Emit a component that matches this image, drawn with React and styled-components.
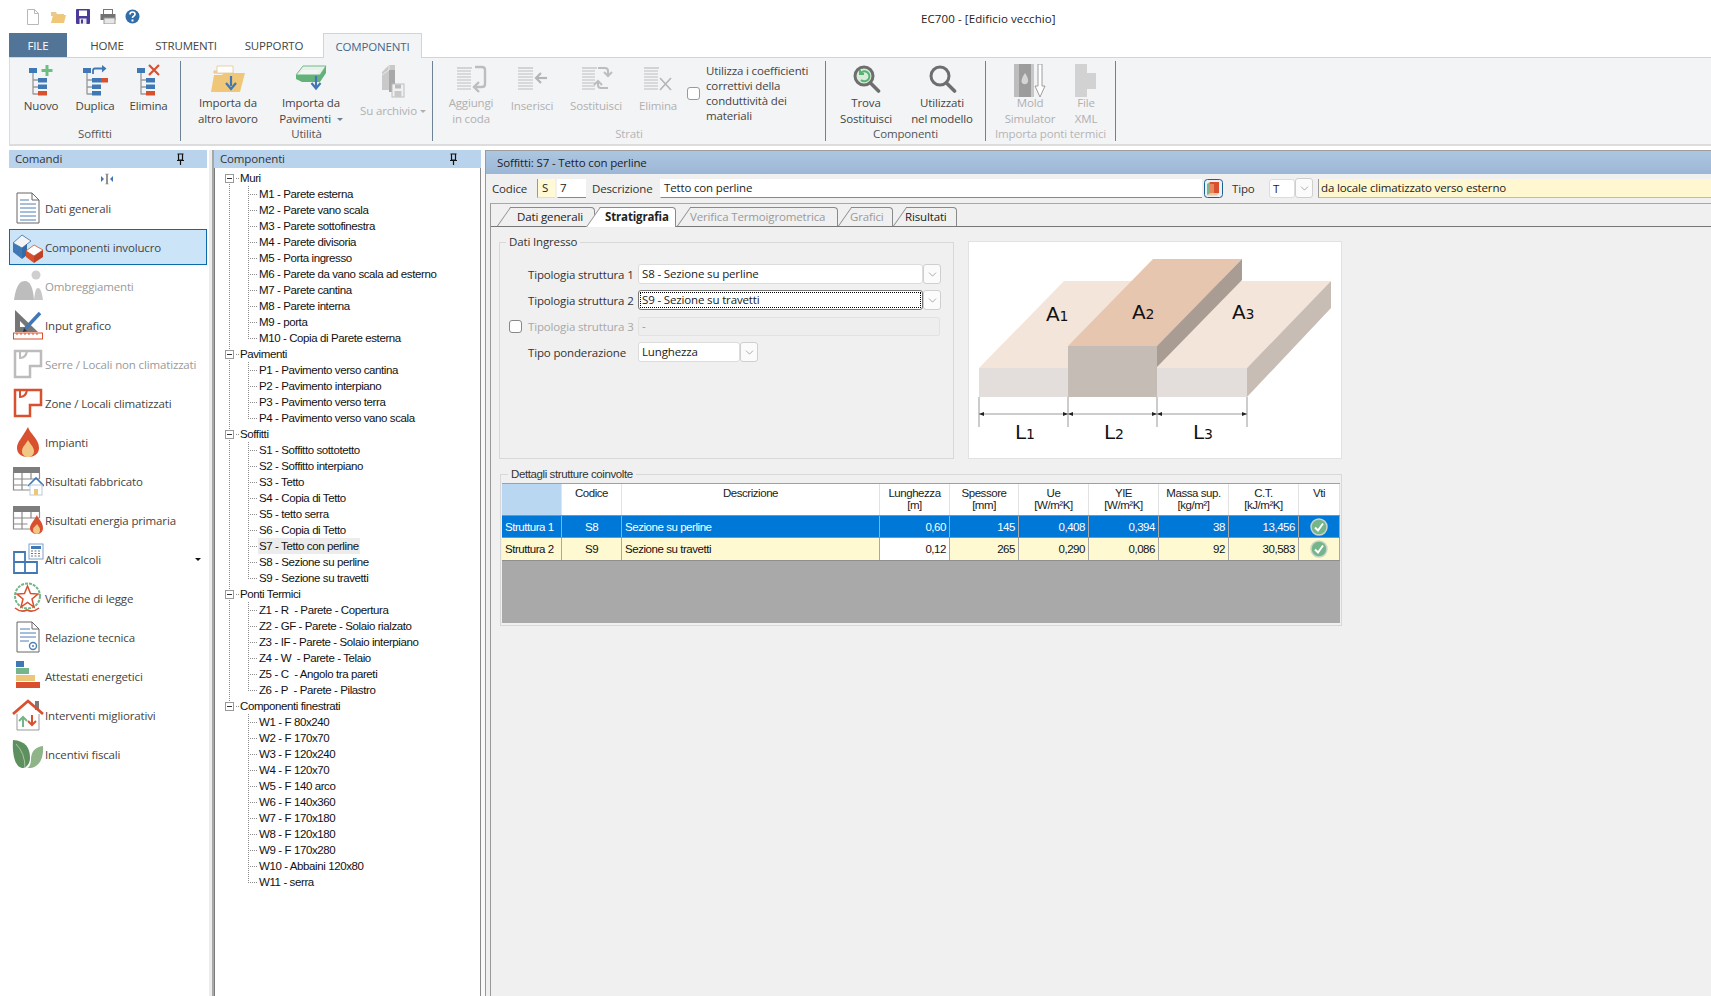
import React from 'react';
import styled, { createGlobalStyle } from 'styled-components';
import { ChevronDown } from 'lucide-react';

const GlobalStyle = createGlobalStyle`
  html, body { margin: 0; padding: 0; background: #fff; }
  body { font-family: "Open Sans", "Liberation Sans", sans-serif; font-size: 11.5px; letter-spacing: -0.15px; color: #333; }
  #root { height: 996px; overflow: hidden; }
  * { box-sizing: border-box; }
`;

const Page = styled.div`
  width: 1711px;
  height: 996px;
  display: flex;
  flex-direction: column;
  overflow: hidden;
`;

/* ---------- title + ribbon ---------- */

const TitleBar = styled.div`
  height: 33px;
  display: flex;
  align-items: center;
  padding-left: 20px;
`;
const QuickIcon = styled.div`
  width: 25px;
  display: flex;
  justify-content: center;
`;
const Title = styled.div`
  margin-left: 776px;
  padding-top: 4px;
  color: #222;
  letter-spacing: 0.1px;
`;
const TabRow = styled.div`
  height: 24px;
  display: flex;
  margin-left: 9px;
  position: relative;
  z-index: 1;
`;
const FileTab = styled.div`
  width: 58px;
  background: #527597;
  color: #fff;
  display: flex;
  align-items: center;
  justify-content: center;
`;
const MenuTab = styled.div`
  width: ${p => p.$w}px;
  display: flex;
  align-items: center;
  justify-content: center;
  color: ${p => (p.$active ? '#45688a' : '#444')};
  background: ${p => (p.$active ? '#f3f4f6' : 'transparent')};
  border: 1px solid ${p => (p.$active ? '#d4d4d4' : 'transparent')};
  border-bottom: none;
  height: ${p => (p.$active ? '25px' : '24px')};
`;
const Ribbon = styled.div`
  height: 89px;
  margin-left: 9px;
  background: #f3f4f6;
  border-top: 1px solid #d4d4d4;
  border-bottom: 2px solid #dcdcdc;
  border-left: 1px solid #dcdcdc;
  display: flex;
`;
const Group = styled.div`
  width: ${p => p.$w}px;
  margin: 3px 0 3px;
  border-right: 1px solid #6d8297;
  display: flex;
  flex-direction: column;
`;
const GroupItems = styled.div`
  height: 70px;
  display: flex;
  padding-left: ${p => p.$pl || 0}px;
`;
const GroupLabel = styled.div`
  text-align: center;
  line-height: 14px;
  color: ${p => (p.$off ? '#b5b5b5' : '#555')};
`;
const RibbonBtn = styled.div`
  width: ${p => p.$w}px;
  display: flex;
  flex-direction: column;
  align-items: center;
  color: ${p => (p.$off ? '#b0b0b0' : '#444')};
  text-align: center;
  line-height: 16px;
`;
const RibbonIcon = styled.div`
  height: 34px;
  padding-top: 3px;
  display: flex;
  align-items: flex-start;
  justify-content: center;
`;
const BtnText = styled.div`
  margin-top: ${p => p.$mt || 0}px;
  white-space: nowrap;
  position: relative;
`;
const Caret = styled.span`
  display: inline-block;
  width: 0;
  height: 0;
  margin-left: ${p => p.$ml ?? 3}px;
  vertical-align: middle;
  border-left: 3px solid transparent;
  border-right: 3px solid transparent;
  border-top: 3px solid ${p => p.$color || '#6b7f96'};
`;
const RibbonCheck = styled.div`
  display: flex;
  align-items: center;
  margin-left: 1px;
  height: 64px;
  gap: 6px;
  line-height: 15px;
  color: #444;
  white-space: nowrap;
`;
const Box = styled.span`
  display: inline-block;
  flex: none;
  width: 13px;
  height: 13px;
  background: #fff;
  border: 1px solid ${p => p.$c || '#999'};
  border-radius: 3px;
`;

/* ---------- body ---------- */

const Body = styled.div`
  flex: 1;
  display: flex;
  padding: 4px 0 0 9px;
  min-height: 0;
`;
const Sidebar = styled.div`
  width: 200px;
  flex: none;
`;
const Splitter = styled.div`
  width: ${p => p.$w}px;
  background: ${p => p.$bg || '#ececec'};
  border-right: 2px solid ${p => p.$c || 'transparent'};
  flex: none;
`;
const PanelHeader = styled.div`
  height: 18px;
  width: ${p => (p.$w ? `${p.$w}px` : 'auto')};
  background: #b9d3ec;
  display: flex;
  align-items: center;
  justify-content: space-between;
  padding: 0 ${p => p.$pr}px 1px 6px;
  color: #333;
`;
const CollapseRow = styled.div`
  height: 22px;
  width: 196px;
  display: flex;
  align-items: center;
  justify-content: center;
`;
const NavItem = styled.div`
  height: 36px;
  margin-bottom: 3px;
  width: 198px;
  display: flex;
  align-items: center;
  padding-left: 1px;
  white-space: nowrap;
  background: ${p => (p.$active ? '#cce4f7' : 'transparent')};
  border: 1px solid ${p => (p.$active ? '#0b6bab' : 'transparent')};
  color: ${p => (p.$off ? '#9a9a9a' : '#444')};
`;
const NavIcon = styled.div`
  width: 34px;
  height: 32px;
  display: flex;
  align-items: center;
  justify-content: center;
  flex: none;
`;
const NavCaret = styled.div`
  margin-left: auto;
  padding-right: 5px;
  display: flex;
`;

const TreePanel = styled.div`
  width: 267px;
  flex: none;
  display: flex;
  flex-direction: column;
`;
const TreeBox = styled.div`
  flex: 1;
  border-left: 1px solid #7a7a7a;
  border-right: 1px solid #8a8a8a;
  padding-top: 2px;
  font-family: "Liberation Sans", sans-serif;
  font-size: 11.5px;
  color: #111;
  letter-spacing: -0.4px;
`;
const TreeRow = styled.div`
  height: 16px;
  line-height: 16px;
  display: flex;
  white-space: nowrap;
`;
const dots = 'repeating-linear-gradient(to bottom, #8a8a8a 0 1px, transparent 1px 2px)';
const hdots = 'repeating-linear-gradient(to right, #8a8a8a 0 1px, transparent 1px 2px)';
const RootGuide = styled.div`
  width: ${p => p.$w}px;
  flex: none;
  display: flex;
  align-items: center;
  margin-left: 1px;
  background-image: ${p => (p.$line ? dots : 'none')};
  background-repeat: no-repeat;
  background-size: 1px ${p => (p.$half ? '8px' : '100%')};
  background-position: 13px ${p => (p.$halfBottom ? 'bottom' : 'top')};
`;
const ToggleBox = styled.div`
  width: 9px;
  height: 9px;
  background: #fff;
  border: 1px solid #9a9a9a;
  margin-left: 9px;
  display: flex;
  align-items: center;
  justify-content: center;
  &::after { content: ""; width: 5px; height: 1px; background: #333; }
`;
const Stub = styled.div`
  width: 19px;
  flex: none;
  background-image: ${hdots}, ${dots};
  background-repeat: no-repeat;
  background-size: 10px 1px, 1px ${p => (p.$last ? '8px' : '100%')};
  background-position: 6px 8px, 6px top;
`;
const RootStub = styled.div`
  width: 4px;
  flex: none;
  background-image: ${hdots};
  background-repeat: no-repeat;
  background-size: 4px 1px;
  background-position: 0 8px;
`;
const TreeLabel = styled.div`
  padding: 0 1px;
  margin-left: ${p => p.$ml || 0}px;
  background: ${p => (p.$sel ? '#ececec' : 'transparent')};
`;

const Main = styled.div`
  flex: 1;
  background: #f0f0f0;
  border-left: 1px solid #999;
  display: flex;
  flex-direction: column;
  min-width: 0;
`;
const MainHeader = styled.div`
  height: 24px;
  background: linear-gradient(#adc6e0, #9cb7d6);
  border-top: 1px solid #9c9c9c;
  padding-left: 11px;
  display: flex;
  align-items: center;
  color: #222;
`;
const CodeRow = styled.div`
  height: 29px;
  display: flex;
  align-items: center;
  padding: 0 0 1px 6px;
`;
const RowLabel = styled.div`
  color: #333;
  width: ${p => p.$w}px;
  margin-left: ${p => p.$ml || 0}px;
  flex: none;
`;
const CodeField = styled.div`
  width: ${p => p.$w}px;
  height: 19px;
  margin-left: ${p => p.$ml || 0}px;
  background: ${p => p.$bg || '#fff'};
  border-bottom: 1px solid ${p => p.$line || '#ddd'};
  border-left: 1px solid ${p => p.$left || 'transparent'};
  padding-left: ${p => p.$pad ?? 3}px;
  line-height: 18px;
  flex: none;
  color: #222;
  white-space: nowrap;
`;
const BookWrap = styled.div`
  margin-left: 2px;
  display: flex;
  flex: none;
`;
const Pane = styled.div`
  flex: 1;
  margin-left: 4px;
  border-top: 1px solid #a8a8a8;
  border-left: 1px solid #999;
`;
const TabStrip = styled.div`
  height: 23px;
  display: flex;
  align-items: flex-end;
  padding-left: 6px;
  border-bottom: 1px solid #777;
`;
const Tab = styled.div`
  position: relative;
  isolation: isolate;
  z-index: ${p => (p.$active ? 2 : 1)};
  width: ${p => p.$w}px;
  margin-left: ${p => p.$ml || 0}px;
  height: ${p => (p.$active ? '20px' : '19px')};
  margin-bottom: ${p => (p.$active ? '-1px' : '0')};
  padding-left: ${p => p.$pl}px;
  line-height: 19px;
  white-space: nowrap;
  font-weight: ${p => (p.$active ? 700 : 400)};
  color: ${p => (p.$off ? '#9a9a9a' : '#222')};
  &::before {
    content: "";
    position: absolute;
    z-index: -1;
    left: 0;
    top: 0;
    bottom: 0;
    width: 26px;
    transform-origin: bottom left;
    transform: skewX(-35deg);
    background: ${p => (p.$active ? '#fff' : '#f0f0f0')};
    border-left: 1px solid #8a8a8a;
    border-top: 1px solid #8a8a8a;
  }
  &::after {
    content: "";
    position: absolute;
    z-index: -1;
    left: 20px;
    right: 0;
    top: 0;
    bottom: 0;
    background: ${p => (p.$active ? '#fff' : '#f0f0f0')};
    border-top: 1px solid #8a8a8a;
    border-right: 1px solid #8a8a8a;
    border-top-right-radius: 4px;
  }
`;
const TopRow = styled.div`
  display: flex;
  align-items: flex-start;
  margin: 8px 0 0 8px;
`;
const FieldSet = styled.fieldset`
  margin: 0;
  min-width: 0;
  width: ${p => p.$w}px;
  height: ${p => p.$h}px;
  border: 1px solid #d8d8d8;
  padding: ${p => p.$pad};
`;
const Legend = styled.legend`
  margin-left: 6px;
  padding: 0 3px;
  line-height: 14px;
  color: #333;
  font-family: ${p => (p.$narrow ? '"Liberation Sans", sans-serif' : 'inherit')};
  letter-spacing: ${p => (p.$narrow ? '-0.4px' : 'inherit')};
`;
const Field = styled.div`
  height: 20px;
  margin-bottom: 6px;
  display: flex;
  align-items: center;
  padding-left: 9px;
`;
const FieldCheck = styled.div`
  width: 19px;
  flex: none;
  display: flex;
`;
const FieldLabel = styled.div`
  width: 110px;
  flex: none;
  white-space: nowrap;
  color: ${p => (p.$off ? '#a8a8a8' : '#333')};
`;
const Combo = styled.div`
  width: ${p => p.$w}px;
  height: ${p => p.$h || 20}px;
  margin-left: ${p => p.$ml || 0}px;
  flex: none;
  background: #fff;
  border: 1px solid ${p => (p.$focus ? '#777' : '#dcdcdc')};
  border-radius: 3px;
  padding: 1px 3px;
  line-height: 16px;
  color: #222;
  position: relative;
  &::after {
    content: "";
    display: ${p => (p.$focus ? 'block' : 'none')};
    position: absolute;
    inset: 1px;
    border: 1px dotted #000;
  }
`;
const ComboArrow = styled.div`
  width: 18px;
  height: 20px;
  flex: none;
  background: #fbfbfb;
  border: 1px solid #cfcfcf;
  border-radius: 3px;
  display: flex;
  align-items: center;
  justify-content: center;
  color: #666;
`;
const DisabledBox = styled.div`
  width: 302px;
  height: 19px;
  flex: none;
  background: #eee;
  border: 1px solid #e2e2e2;
  border-radius: 2px;
  padding-left: 3px;
  line-height: 16px;
  color: #999;
`;
const Picture = styled.div`
  width: 374px;
  height: 218px;
  margin: 6px 0 0 14px;
  background: #fff;
  border: 1px solid #e2e2e2;
  flex: none;
`;
const DetailWrap = styled.div`
  margin: 8px 0 0 9px;
`;
const GridBox = styled.div`
  width: 838px;
  height: 140px;
  margin-top: 2px;
  background: #a9a9a9;
  border-top: 1px solid #a0a0a0;
  font-family: "Liberation Sans", sans-serif;
  font-size: 11.5px;
  letter-spacing: -0.45px;
`;
const GridRow = styled.div`
  display: grid;
  grid-template-columns: 60px 60px 258px 70px 69px 70px 70px 70px 70px 41px;
  height: ${p => p.$h}px;
  background: ${p => p.$bg};
  color: ${p => p.$color};
  border-bottom: 1px solid #8f8f8f;
`;
const HeadCell = styled.div`
  background: ${p => p.$bg || '#fff'};
  border-right: 1px solid #e3e3e3;
  text-align: center;
  line-height: 12px;
  padding-top: 3px;
  color: #222;
`;
const Cell = styled.div`
  display: flex;
  align-items: center;
  justify-content: ${p => p.$j || 'flex-start'};
  padding: 0 3px;
  border-right: 1px solid #a8a8a8;
  background: ${p => p.$bg || 'transparent'};
  white-space: nowrap;
`;

/* ---------- icons ---------- */

const Ico = ({ w = 32, h = 32, vb, children }) => (
  <svg width={w} height={h} viewBox={vb || `0 0 ${w} ${h}`} fill="none">{children}</svg>
);

const Pin = () => (
  <Ico w={9} h={12}>
    <path d="M1.500 1h6M2.500 1v6h4V1M1 7.500h7M4.500 8v4" stroke="#111" strokeWidth="1.200" />
  </Ico>
);

const CollapseGlyph = () => (
  <Ico w={14} h={12}>
    <path d="M1 3l3 3-3 3z" fill="#3f78b5" />
    <path d="M13 3l-3 3 3 3z" fill="#3f78b5" />
    <path d="M5.500 1H6.500V11H5.500M8.500 1H7.500V11H8.500" stroke="#777" strokeWidth="0.800" />
  </Ico>
);

const TreeBase = ({ last = '#d9502e', children }) => (
  <Ico w={26} h={32}>
    <rect x="1" y="4" width="8" height="5" fill="#3f78b5" />
    <path d="M5 9v21.500M5 16h5M5 23h5M5 30h5" stroke="#999" strokeWidth="1.300" />
    <rect x="10" y="14" width="9" height="4.500" fill="#3f78b5" />
    <rect x="10" y="20.500" width="9" height="4.500" fill={last === 'both' ? '#3f78b5' : '#3f78b5'} />
    <rect x="10" y="27" width="9" height="4.500" fill={last === 'both' ? '#3f78b5' : last} />
    {children}
  </Ico>
);

const LinesBase = ({ children, w = 34, n = 7, x2 = 16 }) => (
  <Ico w={w} h={30}>
    <path d="M3 4h15" stroke="#bdbdbd" strokeWidth="1.200" />
    {Array.from({ length: n }).map((_, i) => (
      <path key={i} d={`M3 ${7 + i * 3}h${x2 - 3}`} stroke="#c6c6c6" strokeWidth="1.200" />
    ))}
    {children}
  </Ico>
);

const New = () => (
  <TreeBase>
    <path d="M19 1v11M13.500 6.500h11" stroke="#6cbf83" strokeWidth="3" />
  </TreeBase>
);
const Dup = () => (
  <TreeBase last="both">
    <path d="M11 10V6.500q0-2 2-2h7" stroke="#3f78b5" strokeWidth="1.800" />
    <path d="M20 1l4.500 3.500L20 8.500z" fill="#3f78b5" />
    <rect x="19" y="14" width="7" height="4.500" fill="#d9502e" />
  </TreeBase>
);
const Del = () => (
  <TreeBase last="#d9502e">
    <path d="M13 1l10 10M23 1L13 11" stroke="#d9502e" strokeWidth="2.200" />
  </TreeBase>
);
const FolderIn = () => (
  <Ico w={36} h={30}>
    <path d="M4 7h3l2-3h13l1 5h-19z" fill="#f7e1b0" stroke="#e0b877" strokeWidth="0.800" />
    <path d="M7 2h16v7H7z" fill="#fff" stroke="#e3c792" strokeWidth="0.800" />
    <path d="M1 28l3-17h8l2-2h21l-5 19z" fill="#f0c778" />
    <path d="M21 12v10" stroke="#3f78b5" strokeWidth="2.200" />
    <path d="M16 19l5 6 5-6" stroke="#3f78b5" strokeWidth="2.200" />
  </Ico>
);
const StackIn = () => (
  <Ico w={32} h={28}>
    <path d="M8 2h23l-6 9H1z" fill="#e8f1e8" stroke="#6fbb85" />
    <path d="M1 11h24l6-9v7l-6 9H7l-6-3z" fill="#63b27a" />
    <path d="M8 6h17l-3 4H4z" fill="#f3f4f6" />
    <path d="M21 12v11" stroke="#3f78b5" strokeWidth="2.200" />
    <path d="M16.500 19l4.500 5.500 4.500-5.500" stroke="#3f78b5" strokeWidth="2.200" />
  </Ico>
);
const BookGray = () => (
  <Ico w={26} h={34}>
    <path d="M2 8l7-7h6v25H2z" fill="#c9c9c9" />
    <path d="M9 1v5L2 11" stroke="#e8e8e8" />
    <path d="M9 6h6v22H9z" fill="#a8a8a8" />
    <rect x="12" y="20" width="12" height="13" fill="#f1f1f1" stroke="#bdbdbd" />
    <rect x="15" y="20.500" width="6" height="4" fill="#bbb" />
    <rect x="14.500" y="27" width="7" height="6" fill="#c9c9c9" />
  </Ico>
);
const AddLines = () => (
  <LinesBase w={34} x2={17}>
    <path d="M21 3h7q3 0 3 3v14q0 3-3 3h-6" stroke="#bdbdbd" strokeWidth="2.400" />
    <path d="M25 18l-5 5 5 5" stroke="#bdbdbd" strokeWidth="2.400" />
  </LinesBase>
);
const InsertLines = () => (
  <LinesBase w={34} x2={18}>
    <path d="M21 14h11" stroke="#b5b5b5" strokeWidth="2.200" />
    <path d="M26 9l-5 5 5 5" stroke="#b5b5b5" strokeWidth="2.200" />
  </LinesBase>
);
const SwapLines = () => (
  <LinesBase w={34} x2={16}>
    <path d="M19 4h7q3 0 3 3v4M25 8l4 4 4-4" stroke="#bdbdbd" strokeWidth="2" />
    <path d="M29 24h-7q-3 0-3-3v-4M15 21l4-4 4 4" stroke="#bdbdbd" strokeWidth="2" />
  </LinesBase>
);
const DelLines = () => (
  <LinesBase w={34} x2={17}>
    <path d="M19 14l11 12M30 14L19 26" stroke="#b5b5b5" strokeWidth="1.600" />
  </LinesBase>
);
const Lens = ({ green }) => (
  <Ico w={30} h={30}>
    <circle cx="13" cy="12" r="9" stroke="#6e6e6e" strokeWidth="3" fill={green ? '#d8ecd9' : 'none'} />
    <path d="M19.500 19l8 8" stroke="#6e6e6e" strokeWidth="3.600" strokeLinecap="round" />
    {green && <path d="M9 10a5 5 0 1 1 1 6M9 6v4h4" stroke="#58b273" strokeWidth="2" />}
  </Ico>
);
const Mold = () => (
  <Ico w={34} h={34}>
    <rect x="1" y="0" width="5" height="33" fill="#bdbdbd" />
    <rect x="6" y="0" width="12" height="33" fill="#9c9c9c" />
    <path d="M12 9q4 6 3 9a3.500 3.500 0 0 1-6.500 0Q8 15 12 9z" fill="#d5d5d5" />
    <rect x="18" y="0" width="3" height="33" fill="#c8c8c8" />
    <path d="M25 0h4v22h3l-5 11-5-11h3z" fill="#fff" stroke="#9e9e9e" />
  </Ico>
);
const Xml = () => (
  <Ico w={26} h={34}>
    <path d="M2 0h12v9h9v16h-9v8H2z" fill="#d2d2d2" />
  </Ico>
);

const Book = () => (
  <Ico w={19} h={19}>
    <rect x="0.500" y="0.500" width="18" height="18" rx="3" fill="#e8f2f8" stroke="#1d5f8f" />
    <path d="M3 5l3-2v12l-3 1z" fill="#79b98a" />
    <path d="M6 3h9v11H6z" fill="#d9502e" />
    <path d="M6 5h4v9H6z" fill="#e7865f" />
    <path d="M6 14h9l-2 2.500H3z" fill="#e8c9a6" />
  </Ico>
);

const FloorPlan = ({ c }) => (
  <Ico>
    <path d="M3 3h26v15H18v11H3z" stroke={c} strokeWidth="2.500" fill="none" />
    <path d="M8 3v7q6 0 7-7" stroke={c} strokeWidth="2" fill="none" />
  </Ico>
);
const ResultGrid = ({ children }) => (
  <Ico>
    <rect x="1" y="2" width="27" height="6" fill="#7d7d7d" />
    <path d="M1.500 8v17h19M27.500 8v6M1.500 14h26M1.500 20h14M10 8v17M19 8v6" stroke="#8a8a8a" strokeWidth="1.200" />
    {children}
  </Ico>
);
const navIcons = {
  doc: (
    <Ico>
      <path d="M5 1h15l7 7v23H5z" fill="#fff" stroke="#666" />
      <path d="M20 1v7h7" stroke="#666" />
      <path d="M8 8h9M8 12h16M8 16h16M8 20h16M8 24h16M8 28h16" stroke="#4f7fb5" />
    </Ico>
  ),
  comp: (
    <Ico>
      <path d="M1 12l9-8 9 6-9 7z" fill="#f4f4f4" stroke="#2f6ea8" strokeWidth="0.800" />
      <path d="M1 12v9l9 7V17z" fill="#3f78b5" />
      <path d="M10 17v11l5-4V13z" fill="#2f6ea8" />
      <path d="M14 20l8-6 9 5-9 6z" fill="#fff" stroke="#d9502e" strokeWidth="0.800" />
      <path d="M14 20v6l8 6v-7z" fill="#d9502e" />
      <path d="M22 25v7l9-6v-7z" fill="#bf4224" />
    </Ico>
  ),
  shade: (
    <Ico>
      <circle cx="24" cy="5" r="4.500" fill="#cfcfcf" />
      <path d="M2 30C4 15 8 11 13 11s8 6 9 19z" fill="#bdbdbd" />
      <path d="M22 30c1-9 2-12 4-12 3 0 4 6 5 12z" fill="#c8c8c8" />
    </Ico>
  ),
  input: (
    <Ico>
      <path d="M3 1l23 22H3zM8 12v6h6z" fill="#767676" fillRule="evenodd" />
      <path d="M13 20L28 4" stroke="#3f78b5" strokeWidth="3.500" />
      <path d="M11 23l1-4 3 3z" fill="#333" />
      <rect x="1.500" y="24" width="29" height="6" fill="#fff" stroke="#d9502e" />
      <path d="M5 24v2M9 24v2M13 24v2M17 24v2M21 24v2M25 24v2" stroke="#d9502e" />
    </Ico>
  ),
  serre: <FloorPlan c="#bcbcbc" />,
  zone: <FloorPlan c="#d9502e" />,
  fire: (
    <Ico>
      <path d="M16 1c2 7 11 12 11 21 0 6-5 9-11 9S5 28 5 22c0-6 5-10 11-21z" fill="#d9502e" />
      <path d="M16 14c2 4 6 7 6 11 0 4-3 6-6 6s-6-2-6-6c0-4 4-7 6-11z" fill="#f2c685" />
    </Ico>
  ),
  resHouse: (
    <ResultGrid>
      <path d="M16 21l8-8 8 8" stroke="#3f78b5" strokeWidth="1.600" />
      <rect x="18" y="20" width="12" height="10" fill="#fff" stroke="#b9c9da" />
      <rect x="22" y="24" width="4" height="6" fill="#ecc77b" />
    </ResultGrid>
  ),
  resFire: (
    <ResultGrid>
      <path d="M25 11c1 4 6 7 6 13 0 4-3 6-6 6s-7-2-7-6c0-4 4-7 7-13z" fill="#d9502e" />
      <path d="M25 20c1 2 3 3 3 6s-2 4-3 4-4-1-4-4 3-4 4-6z" fill="#f2c685" />
    </ResultGrid>
  ),
  calc: (
    <Ico>
      <path d="M2 9h11v10H2zM2 19h11v11H2zM13 19h12v11H13z" stroke="#3f78b5" strokeWidth="1.800" />
      <rect x="17" y="1" width="14" height="15" fill="#fff" stroke="#7fa3c9" />
      <rect x="19" y="3" width="10" height="3" fill="#3f78b5" />
      <path d="M19 8h2M22.500 8h2M26 8h2M19 10.500h2M22.500 10.500h2M26 10.500h2M19 13h2M22.500 13h2M26 13h2" stroke="#777" />
    </Ico>
  ),
  star: (
    <Ico>
      <circle cx="15.500" cy="14" r="12.500" stroke="#74b58a" strokeWidth="2" strokeDasharray="3 1" />
      <path d="M15.500 4l3 7.500 7.500.5-6 5 2 8-6.500-4.500L9 25l2-8-6-5 7.500-.5z" fill="#fff" stroke="#d9502e" strokeWidth="1.500" />
      <path d="M3 26q6 5 12 2 6 3 12-2" stroke="#d9502e" strokeWidth="1.600" />
    </Ico>
  ),
  report: (
    <Ico>
      <path d="M5 1h15l7 7v23H5z" fill="#fff" stroke="#666" />
      <path d="M20 1v7h7" stroke="#666" />
      <path d="M8 8h10M8 12h16M8 16h16M8 20h9" stroke="#4f7fb5" />
      <circle cx="21" cy="25" r="3.500" stroke="#4f7fb5" strokeWidth="1.400" />
      <circle cx="21" cy="25" r="1" fill="#4f7fb5" />
    </Ico>
  ),
  label: (
    <Ico>
      <rect x="4" y="1" width="8" height="6" fill="#3f78b5" />
      <rect x="4" y="8" width="13" height="6" fill="#74b58a" />
      <rect x="4" y="15" width="19" height="6" fill="#ecc77b" />
      <rect x="4" y="22" width="24" height="6" fill="#d9502e" />
    </Ico>
  ),
  improve: (
    <Ico>
      <rect x="23" y="2" width="4" height="9" fill="#7a7a7a" />
      <path d="M5 15v16h22V15" fill="#fff" stroke="#999" />
      <path d="M1 15L16 2l15 13" stroke="#d9502e" strokeWidth="2.800" />
      <path d="M11 28V18M7 22l4-4 4 4" stroke="#74b58a" strokeWidth="2" />
      <path d="M20 16v10M16 22l4 4 4-4" stroke="#d9502e" strokeWidth="2" />
    </Ico>
  ),
  leaf: (
    <Ico>
      <path d="M1 2c12 1 17 7 17 18 0 5-3 10-8 10C3 29 0 16 1 2z" fill="#5d8f5f" />
      <path d="M31 8c-8 1-12 6-12 13 0 4-1 8-4 9 11 1 17-8 16-22z" fill="#8fb488" />
      <path d="M4 6q9 9 9 24" stroke="#a9c8a6" />
    </Ico>
  ),
};

const CheckOk = () => (
  <Ico w={18} h={18}>
    <circle cx="9" cy="9" r="8" fill="#74b58a" stroke="#c9d4cb" strokeWidth="1.500" />
    <path d="M5 9.500l3 3 5-7" stroke="#fff" strokeWidth="2" />
  </Ico>
);

const Quick = {
  file: (
    <Ico w={14} h={16}>
      <path d="M1.500 .5h7l4 4v11h-11zM8.500 .5v4h4" fill="#fff" stroke="#b8b8b8" />
    </Ico>
  ),
  open: (
    <Ico w={16} h={14}>
      <path d="M1 2h5l1 2h7v2H1z" fill="#e9c98c" />
      <path d="M1 13l2-8h13l-2 8z" fill="#f0c778" />
    </Ico>
  ),
  save: (
    <Ico w={14} h={15}>
      <rect width="14" height="15" rx="1" fill="#4b3a9a" />
      <rect x="3" y="1.500" width="8" height="5.500" fill="#fff" />
      <rect x="3.500" y="9.500" width="7" height="5.500" fill="#e8e8e8" />
      <rect x="5" y="10.500" width="2" height="4" fill="#4b3a9a" />
    </Ico>
  ),
  print: (
    <Ico w={16} h={15}>
      <rect x="3.500" y="0.500" width="9" height="5" fill="#fff" stroke="#777" />
      <rect x="0.500" y="5" width="15" height="6" fill="#727272" />
      <rect x="4" y="9" width="11" height="6" fill="#e6e6e6" stroke="#999" />
    </Ico>
  ),
  help: (
    <Ico w={15} h={15}>
      <circle cx="7.500" cy="7.500" r="7" fill="#2f6ea8" />
      <path d="M5 5.500q0-2.500 2.500-2.500t2.500 2.200q0 1.300-1.500 2.100-1 .5-1 1.700" stroke="#fff" strokeWidth="1.700" />
      <rect x="6.500" y="10.500" width="2" height="2" fill="#fff" />
    </Ico>
  ),
};

/* ---------- data ---------- */

const navItems = [
  ['doc', 'Dati generali'],
  ['comp', 'Componenti involucro', 'active'],
  ['shade', 'Ombreggiamenti', 'off'],
  ['input', 'Input grafico'],
  ['serre', 'Serre / Locali non climatizzati', 'off'],
  ['zone', 'Zone / Locali climatizzati'],
  ['fire', 'Impianti'],
  ['resHouse', 'Risultati fabbricato'],
  ['resFire', 'Risultati energia primaria'],
  ['calc', 'Altri calcoli', 'menu'],
  ['star', 'Verifiche di legge'],
  ['report', 'Relazione tecnica'],
  ['label', 'Attestati energetici'],
  ['improve', 'Interventi migliorativi'],
  ['leaf', 'Incentivi fiscali'],
];

const tree = [
  ['Muri', ['M1 - Parete esterna', 'M2 - Parete vano scala', 'M3 - Parete sottofinestra', 'M4 - Parete divisoria', 'M5 - Porta ingresso', 'M6 - Parete da vano scala ad esterno', 'M7 - Parete cantina', 'M8 - Parete interna', 'M9 - porta', 'M10 - Copia di Parete esterna']],
  ['Pavimenti', ['P1 - Pavimento verso cantina', 'P2 - Pavimento interpiano', 'P3 - Pavimento verso terra', 'P4 - Pavimento verso vano scala']],
  ['Soffitti', ['S1 - Soffitto sottotetto', 'S2 - Soffitto interpiano', 'S3 - Tetto', 'S4 - Copia di Tetto', 'S5 - tetto serra', 'S6 - Copia di Tetto', 'S7 - Tetto con perline', 'S8 - Sezione su perline', 'S9 - Sezione su travetti']],
  ['Ponti Termici', ['Z1 - R\u00a0 - Parete - Copertura', 'Z2 - GF - Parete - Solaio rialzato', 'Z3 - IF - Parete - Solaio interpiano', 'Z4 - W\u00a0 - Parete - Telaio', 'Z5 - C\u00a0 - Angolo tra pareti', 'Z6 - P\u00a0 - Parete - Pilastro']],
  ['Componenti finestrati', ['W1 - F 80x240', 'W2 - F 170x70', 'W3 - F 120x240', 'W4 - F 120x70', 'W5 - F 140 arco', 'W6 - F 140x360', 'W7 - F 170x180', 'W8 - F 120x180', 'W9 - F 170x280', 'W10 - Abbaini 120x80', 'W11 - serra']],
];

const heads = [['Codice'], ['Descrizione'], ['Lunghezza', '[m]'], ['Spessore', '[mm]'], ['Ue', '[W/m²K]'], ['YIE', '[W/m²K]'], ['Massa sup.', '[kg/m²]'], ['C.T.', '[kJ/m²K]'], ['Vti']];
const rows = [
  ['Struttura 1', 'S8', 'Sezione su perline', '0,60', '145', '0,408', '0,394', '38', '13,456'],
  ['Struttura 2', 'S9', 'Sezione su travetti', '0,12', '265', '0,290', '0,086', '92', '30,583'],
];

/* dimension drawing, coordinates taken in the picture's own px */
const SchemePicture = () => {
  const dims = [[9, 'L', '1'], [98, 'L', '2'], [187, 'L', '3']];
  return (
    <svg width="372" height="216" viewBox="0 0 372 216">
      <path d="M10 126H278L362 39H95z" fill="#f3e5da" />
      <path d="M10 126H278V155H10z" fill="#e3dedb" />
      <path d="M278 126L362 39V66L278 155z" fill="#c8bdb5" />
      <path d="M99 104H188L273 17H184z" fill="#e7c6b0" />
      <path d="M99 104H188V155H99z" fill="#c6bcb6" />
      <path d="M188 104L273 17V38L188 125z" fill="#a99c92" />
      <path d="M10 155v30M99 155v30M188 155v30M278 155v30" stroke="#999" />
      <path d="M10 172H278" stroke="#999" />
      {[10, 99, 188].map(x => (
        <g key={x} fill="#222">
          <path d={`M${x} 172l5-2v4z`} />
          <path d={`M${x + 89 + (x === 188 ? 1 : 0)} 172l-5-2v4z`} />
        </g>
      ))}
      <g fontFamily='"DejaVu Sans", sans-serif' fill="#111">
        <text x="77" y="79" fontSize="20">A<tspan fontSize="14">1</tspan></text>
        <text x="163" y="77" fontSize="20">A<tspan fontSize="14">2</tspan></text>
        <text x="263" y="77" fontSize="20">A<tspan fontSize="14">3</tspan></text>
        {dims.map(([x, l, n], i) => (
          <text key={n} x={46 + i * 89} y="197" fontSize="20">{l}<tspan fontSize="14">{n}</tspan></text>
        ))}
      </g>
    </svg>
  );
};

const Arrow = () => (
  <ComboArrow><ChevronDown size={13} strokeWidth={1} /></ComboArrow>
);

export default function App() {
  return (
    <Page>
      <GlobalStyle />
      <TitleBar>
        <QuickIcon>{Quick.file}</QuickIcon>
        <QuickIcon>{Quick.open}</QuickIcon>
        <QuickIcon>{Quick.save}</QuickIcon>
        <QuickIcon>{Quick.print}</QuickIcon>
        <QuickIcon>{Quick.help}</QuickIcon>
        <Title>EC700 - [Edificio vecchio]</Title>
      </TitleBar>
      <TabRow>
        <FileTab>FILE</FileTab>
        <MenuTab $w={80}>HOME</MenuTab>
        <MenuTab $w={78}>STRUMENTI</MenuTab>
        <MenuTab $w={98}>SUPPORTO</MenuTab>
        <MenuTab $w={99} $active>COMPONENTI</MenuTab>
      </TabRow>
      <Ribbon>
        <Group $w={171}>
          <GroupItems $pl={4}>
            <RibbonBtn $w={54}><RibbonIcon><New /></RibbonIcon><BtnText $mt={3}>Nuovo</BtnText></RibbonBtn>
            <RibbonBtn $w={54}><RibbonIcon><Dup /></RibbonIcon><BtnText $mt={3}>Duplica</BtnText></RibbonBtn>
            <RibbonBtn $w={53}><RibbonIcon><Del /></RibbonIcon><BtnText $mt={3}>Elimina</BtnText></RibbonBtn>
          </GroupItems>
          <GroupLabel>Soffitti</GroupLabel>
        </Group>
        <Group $w={252}>
          <GroupItems $pl={7}>
            <RibbonBtn $w={80}><RibbonIcon><FolderIn /></RibbonIcon>Importa da<br />altro lavoro</RibbonBtn>
            <RibbonBtn $w={86}>
              <RibbonIcon><StackIn /></RibbonIcon>
              <BtnText>Importa da</BtnText>
              <BtnText>Pavimenti <Caret /></BtnText>
            </RibbonBtn>
            <RibbonBtn $w={78} $off>
              <RibbonIcon><BookGray /></RibbonIcon>
              <BtnText $mt={8}>Su archivio<Caret $color="#b0b0b0" /></BtnText>
            </RibbonBtn>
          </GroupItems>
          <GroupLabel>Utilità</GroupLabel>
        </Group>
        <Group $w={393}>
          <GroupItems $pl={7}>
            <RibbonBtn $w={62} $off><RibbonIcon><AddLines /></RibbonIcon>Aggiungi<br />in coda</RibbonBtn>
            <RibbonBtn $w={60} $off><RibbonIcon><InsertLines /></RibbonIcon><BtnText $mt={3}>Inserisci</BtnText></RibbonBtn>
            <RibbonBtn $w={68} $off><RibbonIcon><SwapLines /></RibbonIcon><BtnText $mt={3}>Sostituisci</BtnText></RibbonBtn>
            <RibbonBtn $w={56} $off><RibbonIcon><DelLines /></RibbonIcon><BtnText $mt={3}>Elimina</BtnText></RibbonBtn>
            <RibbonCheck>
              <Box />
              <div>Utilizza i coefficienti<br />correttivi della<br />conduttività dei<br />materiali</div>
            </RibbonCheck>
          </GroupItems>
          <GroupLabel $off>Strati</GroupLabel>
        </Group>
        <Group $w={160}>
          <GroupItems>
            <RibbonBtn $w={80}><RibbonIcon><Lens green /></RibbonIcon>Trova<br />Sostituisci</RibbonBtn>
            <RibbonBtn $w={72}><RibbonIcon><Lens /></RibbonIcon>Utilizzati<br />nel modello</RibbonBtn>
          </GroupItems>
          <GroupLabel>Componenti</GroupLabel>
        </Group>
        <Group $w={130}>
          <GroupItems $pl={15}>
            <RibbonBtn $w={58} $off><RibbonIcon><Mold /></RibbonIcon>Mold<br />Simulator</RibbonBtn>
            <RibbonBtn $w={54} $off><RibbonIcon><Xml /></RibbonIcon>File<br />XML</RibbonBtn>
          </GroupItems>
          <GroupLabel $off>Importa ponti termici</GroupLabel>
        </Group>
      </Ribbon>
      <Body>
        <Sidebar>
          <PanelHeader $w={198} $pr={22}>Comandi <Pin /></PanelHeader>
          <CollapseRow><CollapseGlyph /></CollapseRow>
          {navItems.map(([icon, label, state]) => (
            <NavItem key={label} $active={state === 'active'} $off={state === 'off'}>
              <NavIcon>{navIcons[icon]}</NavIcon>
              {label}
              {state === 'menu' && <NavCaret><Caret $ml={0} $color="#111" /></NavCaret>}
            </NavItem>
          ))}
        </Sidebar>
        <Splitter $w={5} $c="#a8a8a8" />
        <TreePanel>
          <PanelHeader $pr={23}>Componenti <Pin /></PanelHeader>
          <TreeBox>
            {tree.map(([root, kids], r) => {
              const lastRoot = r === tree.length - 1;
              return (
                <React.Fragment key={root}>
                  <TreeRow>
                    <RootGuide $w={20} $line $half={lastRoot || r === 0} $halfBottom={r === 0}>
                      <ToggleBox />
                    </RootGuide>
                    <RootStub />
                    <TreeLabel $ml={-1}>{root}</TreeLabel>
                  </TreeRow>
                  {kids.map((kid, k) => (
                    <TreeRow key={kid}>
                      <RootGuide $w={26} $line={!lastRoot} />
                      <Stub $last={k === kids.length - 1} />
                      <TreeLabel $sel={kid.startsWith('S7')} $ml={-3}>{kid}</TreeLabel>
                    </TreeRow>
                  ))}
                </React.Fragment>
              );
            })}
          </TreeBox>
        </TreePanel>
        <Splitter $w={4} $bg="#fafafa" />
        <Main>
          <MainHeader>Soffitti: S7 - Tetto con perline</MainHeader>
          <CodeRow>
            <RowLabel $w={41}>Codice</RowLabel>
            <CodeField $w={18} $bg="#fff9d6" $left="#999" $ml={4} $pad={4}>S</CodeField>
            <CodeField $w={29} $ml={2} $line="#888" $pad={2}>7</CodeField>
            <RowLabel $w={68} $ml={6}>Descrizione</RowLabel>
            <CodeField $w={542} $line="#888">Tetto con perline</CodeField>
            <BookWrap><Book /></BookWrap>
            <RowLabel $w={37} $ml={9}>Tipo</RowLabel>
            <Combo $w={26} $h={19}>T</Combo>
            <Arrow />
            <CodeField $w={393} $bg="#fff7d0" $left="#999" $ml={5} $line="#bbb" $pad={2}>da locale climatizzato verso esterno</CodeField>
          </CodeRow>
          <Pane>
            <TabStrip>
              <Tab $w={98} $pl={20}>Dati generali</Tab>
              <Tab $w={90} $pl={19} $ml={-9} $active>Stratigrafia</Tab>
              <Tab $w={161} $pl={13} $ml={1} $off>Verifica Termoigrometrica</Tab>
              <Tab $w={55} $pl={12} $off>Grafici</Tab>
              <Tab $w={64} $pl={12}>Risultati</Tab>
            </TabStrip>
            <TopRow>
              <FieldSet $w={455} $h={224} $pad="15px 0 0">
                <Legend>Dati Ingresso</Legend>
                <Field>
                  <FieldCheck />
                  <FieldLabel>Tipologia struttura 1</FieldLabel>
                  <Combo $w={285}>S8 - Sezione su perline</Combo>
                  <Arrow />
                </Field>
                <Field>
                  <FieldCheck />
                  <FieldLabel>Tipologia struttura 2</FieldLabel>
                  <Combo $w={285} $focus>S9 - Sezione su travetti</Combo>
                  <Arrow />
                </Field>
                <Field>
                  <FieldCheck><Box $c="#888" /></FieldCheck>
                  <FieldLabel $off>Tipologia struttura 3</FieldLabel>
                  <DisabledBox>-</DisabledBox>
                </Field>
                <Field>
                  <FieldCheck />
                  <FieldLabel>Tipo ponderazione</FieldLabel>
                  <Combo $w={102}>Lunghezza</Combo>
                  <Arrow />
                </Field>
              </FieldSet>
              <Picture><SchemePicture /></Picture>
            </TopRow>
            <DetailWrap>
              <FieldSet $w={842} $h={159} $pad="0 1px">
                <Legend $narrow>Dettagli strutture coinvolte</Legend>
                <GridBox>
                  <GridRow $h={32} $bg="#fff" $color="#222">
                    <HeadCell $bg="#b9d7f0" />
                    {heads.map(h => (
                      <HeadCell key={h[0]}>{h[0]}{h[1] && <br />}{h[1]}</HeadCell>
                    ))}
                  </GridRow>
                  {rows.map((row, i) => (
                    <GridRow key={row[0]} $h={i === 0 ? 22 : 23} $bg={i === 0 ? '#0078d7' : '#fff9d2'} $color={i === 0 ? '#fff' : '#111'}>
                      {row.map((val, c) => (
                        <Cell
                          key={c}
                          $j={c === 1 ? 'center' : c > 2 ? 'flex-end' : 'flex-start'}
                          $bg={i === 1 && c === 3 ? '#fff' : undefined}
                        >
                          {val}
                        </Cell>
                      ))}
                      <Cell $j="center"><CheckOk /></Cell>
                    </GridRow>
                  ))}
                </GridBox>
              </FieldSet>
            </DetailWrap>
          </Pane>
        </Main>
      </Body>
    </Page>
  );
}
